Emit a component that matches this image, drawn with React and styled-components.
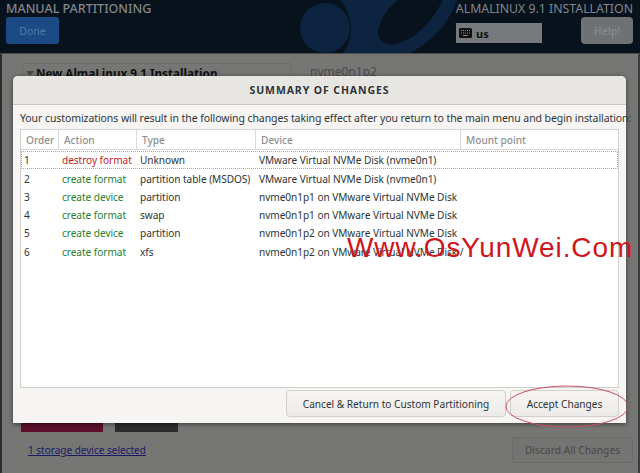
import React from 'react';
import styled, { createGlobalStyle } from 'styled-components';

const GlobalStyle = createGlobalStyle`
    html, body {
        margin: 0;
        padding: 0;
        background: #757575;
    }
    body {
        font-family: 'Noto Sans', 'Open Sans', sans-serif;
    }
`;

const Page = styled.div`
    position: relative;
    width: 640px;
    height: 473px;
    overflow: hidden;
    display: flex;
    flex-direction: column;
    background: #767674;
`;

const Header = styled.header`
    position: relative;
    height: 53px;
    flex: none;
    display: flex;
    justify-content: space-between;
    padding: 0 7px 0 6px;
    background: #07121d;
    border-bottom: 1px solid #4a4c4c;
`;

const HeaderArt = styled.svg`
    position: absolute;
    left: 290px;
    top: 0;
`;

const HeaderLeft = styled.div`
    position: relative;
    display: flex;
    flex-direction: column;
    align-items: flex-start;
`;

const HeaderRight = styled.div`
    position: relative;
    display: flex;
    flex-direction: column;
    align-items: flex-end;
`;

const ScreenTitle = styled.div`
    font-size: 12.5px;
    line-height: 17px;
    font-weight: 500;
    color: #83878b;
    white-space: nowrap;
`;

const ProductTitle = styled(ScreenTitle)`
    font-size: 12.3px;
    font-weight: 400;
`;

const DoneButton = styled.div`
    width: 53px;
    height: 27px;
    display: flex;
    align-items: center;
    justify-content: center;
    border-radius: 3px;
    background: #1c4a85;
    color: #4f79a8;
    font-size: 10.5px;
`;

const HeaderControls = styled.div`
    display: flex;
    gap: 39px;
    margin-top: 6px;
`;

const KeyboardBox = styled.div`
    width: 86px;
    height: 20px;
    display: flex;
    align-items: center;
    gap: 4px;
    padding-left: 3px;
    box-sizing: border-box;
    background: #777a7c;
    color: #111;
    font-size: 11px;
    font-weight: 700;
`;

const HelpButton = styled.div`
    width: 52px;
    height: 27px;
    margin-top: -6px;
    display: flex;
    align-items: center;
    justify-content: center;
    border-radius: 4px;
    background: #6f7274;
    color: #85898b;
    font-size: 10.5px;
    font-weight: 600;
`;

const Body = styled.main`
    flex: 1;
    display: flex;
    flex-direction: column;
    border-left: 2px solid #2e2e2e;
    border-right: 2px solid #3c3c3c;
    background: #767674;
`;

const BehindTop = styled.div`
    display: flex;
    padding: 9px 0 0 20px;
    height: 21px;
`;

const Expander = styled.div`
    width: 269px;
    height: 20px;
    box-sizing: border-box;
    padding-left: 3px;
    border: 1px solid #6c6c6a;
    display: flex;
    align-items: center;
    gap: 2px;
    font-size: 11.7px;
    font-weight: 700;
    color: #111;
    white-space: nowrap;
    align-self: flex-start;
`;

const Triangle = styled.span`
    width: 0;
    height: 0;
    border-left: 4px solid transparent;
    border-right: 4px solid transparent;
    border-top: 5px solid #4a4a4a;
`;

const DeviceName = styled.div`
    margin-left: 19px;
    font-size: 12px;
    color: #4c4c4c;
`;

const BehindBottom = styled.div`
    margin-top: auto;
    height: 50px;
    box-sizing: border-box;
    display: flex;
    flex-direction: column;
    padding: 0 5px 0 19px;
`;

const BlockRow = styled.div`
    display: flex;
    gap: 12px;
`;

const Block = styled.div`
    width: ${props => props.$width}px;
    height: 9px;
    background: ${props => props.$color};
`;

const BottomRow = styled.div`
    display: flex;
    justify-content: space-between;
    align-items: center;
    margin-top: 5px;
`;

const DeviceLink = styled.a`
    margin-left: 7px;
    font-size: 10px;
    color: #1c1a66;
    text-decoration: underline;
`;

const DiscardButton = styled.div`
    width: 121px;
    height: 26px;
    box-sizing: border-box;
    display: flex;
    align-items: center;
    justify-content: center;
    border: 1px solid #6a6a68;
    border-radius: 3px;
    background: #747472;
    color: #4e4e4c;
    font-size: 10.1px;
    font-weight: 500;
`;

const Dialog = styled.section`
    position: absolute;
    left: 13px;
    top: 76px;
    width: 613px;
    height: 347px;
    display: flex;
    flex-direction: column;
    border-radius: 5px 5px 0 0;
    background: #f6f5f4;
    box-shadow: 0 1px 5px rgba(0, 0, 0, 0.55);
`;

const DialogTitle = styled.h2`
    margin: 0;
    height: 28px;
    flex: none;
    display: flex;
    align-items: center;
    justify-content: center;
    background: #e8e6e3;
    border-bottom: 1px solid #c9c6c2;
    border-radius: 5px 5px 0 0;
    font-size: 10.5px;
    font-weight: 700;
    letter-spacing: 0.9px;
    color: #2e3436;
`;

const Intro = styled.p`
    margin: 0;
    padding: 6px 0 0 7px;
    height: 24px;
    box-sizing: border-box;
    flex: none;
    font-size: 10.5px;
    letter-spacing: -0.08px;
    line-height: 15px;
    color: #2e3436;
    white-space: nowrap;
`;

const TableFrame = styled.div`
    flex: 1;
    margin: 0 7px;
    background: #fff;
    border: 1px solid #d5d2ce;
    border-bottom-color: #d0cdc9;
`;

const ColumnHead = styled.div`
    display: grid;
    grid-template-columns: 38px 78px 119px 205px 1fr;
    height: 20px;
`;

const HeadCell = styled.div`
    display: flex;
    align-items: center;
    padding-left: 5px;
    font-size: 10.1px;
    font-weight: 500;
    color: #8d9091;
    border-right: 1px solid #dcdad7;
    border-bottom: 1px solid #dcdad7;
    &:last-child {
        border-right: none;
    }
`;

const TableRow = styled.div`
    display: grid;
    grid-template-columns: 37px 78px 119px 1fr;
    height: ${props => (props.$focused ? '16px' : '18.3px')};
    align-items: center;
    margin: ${props => (props.$focused ? '2px 1px 1.4px 1px' : '0 1px')};
    outline: ${props => (props.$focused ? '1px dotted #a9a9a9' : 'none')};
    font-size: 10.1px;
    letter-spacing: -0.05px;
    color: #2e3436;
    white-space: nowrap;
`;

const OrderCell = styled.span`
    padding-left: 2px;
`;

const ActionCell = styled.span`
    padding-left: 3px;
    color: ${props => (props.$destroy ? '#c01c28' : '#26802f')};
`;

const TextCell = styled.span`
    padding-left: 3px;
`;

const FooterRow = styled.div`
    height: 35px;
    flex: none;
    display: flex;
    justify-content: flex-end;
    gap: 4px;
    padding: 2px 7px 6px 0;
    box-sizing: border-box;
`;

const FooterButton = styled.button`
    width: ${props => props.$width}px;
    height: 27px;
    padding: 0;
    font-family: inherit;
    font-size: 10.1px;
    color: #2e3436;
    background: linear-gradient(#f6f5f4, #edebe9);
    border: 1px solid #d2cfcb;
    border-radius: 4px;
`;

const Watermark = styled.div`
    position: absolute;
    left: 347px;
    top: 230px;
    font-family: 'Liberation Sans', Arial, sans-serif;
    font-size: 28px;
    line-height: 36px;
    letter-spacing: 0.9px;
    color: #d0161c;
    white-space: nowrap;
`;

const Circle = styled.svg`
    position: absolute;
    left: 503px;
    top: 384px;
`;

const rows = [
    { order: 1, action: 'destroy format', type: 'Unknown', device: 'VMware Virtual NVMe Disk (nvme0n1)', destroy: true },
    { order: 2, action: 'create format', type: 'partition table (MSDOS)', device: 'VMware Virtual NVMe Disk (nvme0n1)' },
    { order: 3, action: 'create device', type: 'partition', device: 'nvme0n1p1 on VMware Virtual NVMe Disk' },
    { order: 4, action: 'create format', type: 'swap', device: 'nvme0n1p1 on VMware Virtual NVMe Disk' },
    { order: 5, action: 'create device', type: 'partition', device: 'nvme0n1p2 on VMware Virtual NVMe Disk' },
    { order: 6, action: 'create format', type: 'xfs', device: 'nvme0n1p2 on VMware Virtual NVMe Disk /' }
];

const columns = ['Order', 'Action', 'Type', 'Device', 'Mount point'];

export default function App() {
    return (
        <Page>
            <GlobalStyle />
            <Header>
                <HeaderArt width="170" height="53" viewBox="0 0 170 53">
                    <circle cx="35" cy="28" r="25" fill="#0d2440" />
                    <path d="M50 0 C64 15 64 40 53 53 L120 53 C145 40 160 20 167 0 Z" fill="#0d2440" />
                    <path d="M108 0 L153 0 C142 22 125 40 105 44 C92 46 84 38 90 24 C93 15 100 6 108 0 Z" fill="#07121d" />
                </HeaderArt>
                <HeaderLeft>
                    <ScreenTitle>MANUAL PARTITIONING</ScreenTitle>
                    <DoneButton>Done</DoneButton>
                </HeaderLeft>
                <HeaderRight>
                    <ProductTitle>ALMALINUX 9.1 INSTALLATION</ProductTitle>
                    <HeaderControls>
                        <KeyboardBox>
                            <svg width="13" height="10" viewBox="0 0 13 10">
                                <rect width="13" height="10" rx="1.5" fill="#111" />
                                <path d="M2 2.5h1M4 2.5h1M6 2.5h1M8 2.5h1M10 2.5h1M2 5h1M4 5h1M6 5h1M8 5h1M10 5h1M4 7.5h5" stroke="#8a8d8f" strokeWidth="1" />
                            </svg>
                            us
                        </KeyboardBox>
                        <HelpButton>Help!</HelpButton>
                    </HeaderControls>
                </HeaderRight>
            </Header>
            <Body>
                <BehindTop>
                    <Expander><Triangle />New AlmaLinux 9.1 Installation</Expander>
                    <DeviceName>nvme0n1p2</DeviceName>
                </BehindTop>
                <BehindBottom>
                    <BlockRow>
                        <Block $width={82} $color="#5e0f2c" />
                        <Block $width={63} $color="#2b2b2b" />
                    </BlockRow>
                    <BottomRow>
                        <DeviceLink>1 storage device selected</DeviceLink>
                        <DiscardButton>Discard All Changes</DiscardButton>
                    </BottomRow>
                </BehindBottom>
            </Body>
            <Dialog>
                <DialogTitle>SUMMARY OF CHANGES</DialogTitle>
                <Intro>Your customizations will result in the following changes taking effect after you return to the main menu and begin installation:</Intro>
                <TableFrame>
                    <ColumnHead>
                        {columns.map(name => <HeadCell key={name}>{name}</HeadCell>)}
                    </ColumnHead>
                    {rows.map((row, index) => (
                        <TableRow key={row.order} $focused={index === 0}>
                            <OrderCell>{row.order}</OrderCell>
                            <ActionCell $destroy={row.destroy}>{row.action}</ActionCell>
                            <TextCell>{row.type}</TextCell>
                            <TextCell>{row.device}</TextCell>
                        </TableRow>
                    ))}
                </TableFrame>
                <FooterRow>
                    <FooterButton $width={220}>Cancel &amp; Return to Custom Partitioning</FooterButton>
                    <FooterButton $width={109}>Accept Changes</FooterButton>
                </FooterRow>
            </Dialog>
            <Watermark>Www.OsYunWei.Com</Watermark>
            <Circle width="128" height="46" viewBox="0 0 128 46">
                <ellipse cx="64" cy="22.5" rx="61" ry="20.5" fill="none" stroke="#c9505f" strokeWidth="1" />
            </Circle>
        </Page>
    );
}
